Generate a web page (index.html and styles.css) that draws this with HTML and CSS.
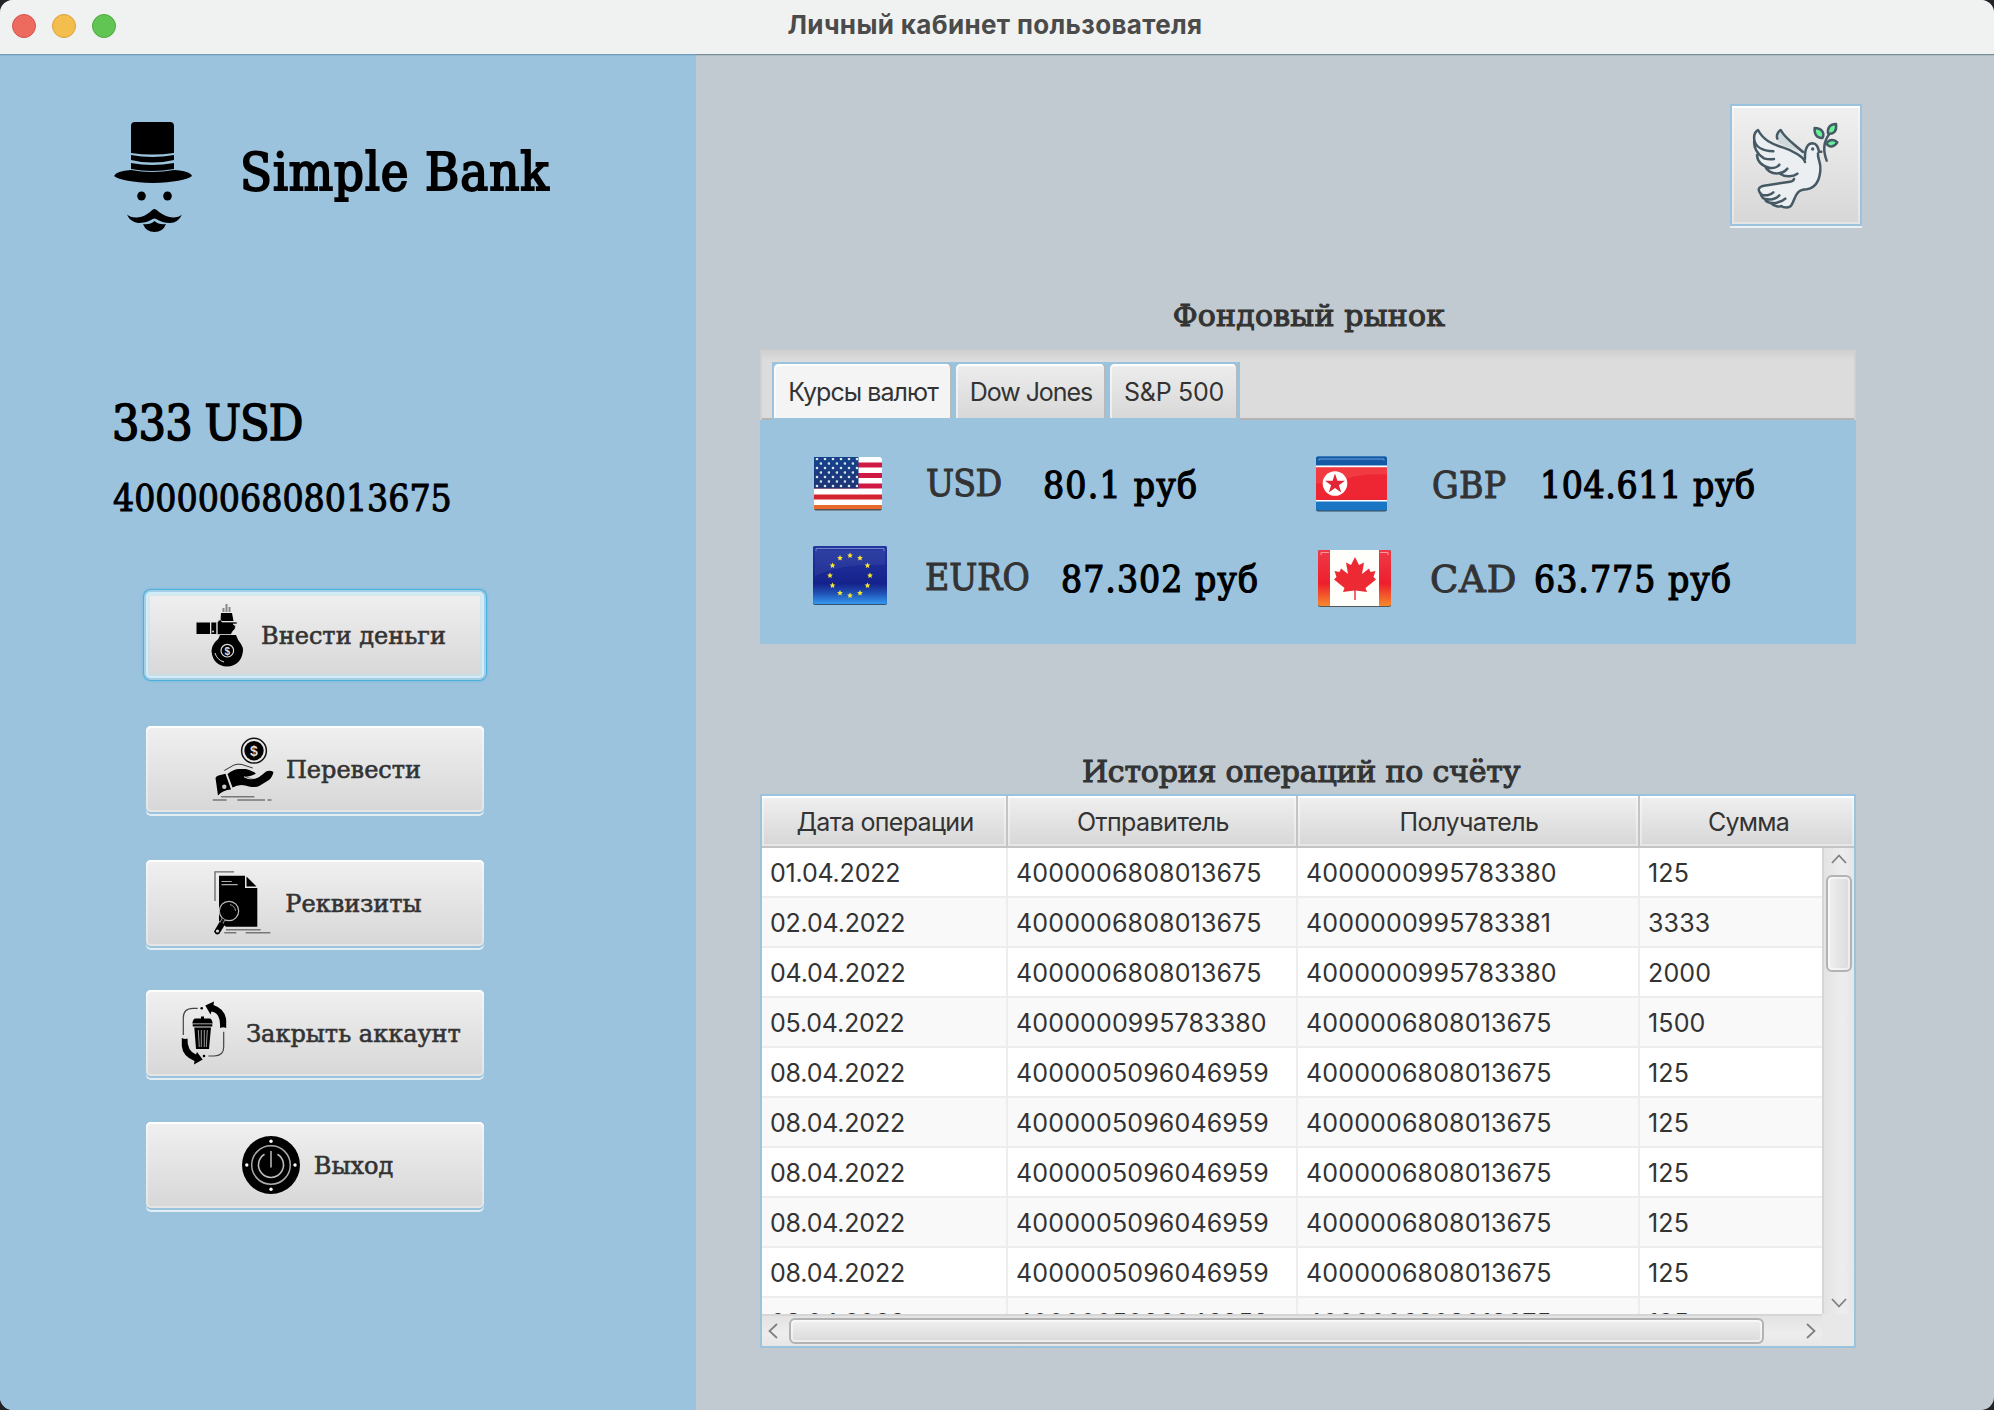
FILE: index.html
```
<!DOCTYPE html>
<html lang="ru">
<head>
<meta charset="utf-8">
<title>Личный кабинет пользователя</title>
<link rel="stylesheet" href="styles.css">
</head>
<body>
<div class="window">
  <header class="titlebar">
    <div class="lights"><i class="light red"></i><i class="light yellow"></i><i class="light green"></i></div>
    <h1 class="window-title">Личный кабинет пользователя</h1>
  </header>
  <div class="content">
    <aside class="side">
      <div class="brand">
        <svg class="logo" viewBox="114 122 78 110">
          <path d="M131 153V126Q131 122 135 122H170Q174 122 174 126V153Q152 156 131 153Z"/>
          <path d="M131 155Q152 159 174 155V160Q152 165 131 160Z"/>
          <path d="M131 163Q152 167 174 163V169Q152 173 131 169Z"/>
          <path d="M114 176Q116 171 131 170Q152 174 174 170Q190 171 192 176Q184 182 153 183Q122 182 114 176Z"/>
          <ellipse cx="141.500" cy="196" rx="4.300" ry="4.500"/><ellipse cx="167.500" cy="196" rx="4.300" ry="4.500"/>
          <path d="M154.500 209Q156 209 159 212Q166 217 173 217.500Q179 217.500 182 214.500Q178 223 170 223Q163 223 158 220Q154.500 217 151 220Q146 223 138 223Q130 222 127 214.500Q131 218 137 217.500Q144 217 150 212Q153 209 154.500 209Z"/>
          <path d="M143 224Q150 225 154.500 221Q159 225 166 224Q163 232 154.500 232Q146 232 143 224Z"/>
        </svg>
        <span class="brand-name">Simple Bank</span>
      </div>
      <div class="balance">333 USD</div>
      <div class="account">4000006808013675</div>
      <nav class="actions">
        <button class="btn focused">
          <svg class="icon" viewBox="0 0 64 64">
            <path d="M39.500 9V5M42.500 9V1M45.500 9V4" stroke="#888" stroke-width="2"/>
            <path d="M37 10H48L49.500 18H36.500Z"/>
            <rect x="12.500" y="19.500" width="13.500" height="11.500"/><rect x="27.300" y="19.500" width="5" height="11.500"/>
            <circle cx="29" cy="28.500" r="1" fill="#ddd"/>
            <path d="M36 32H52Q54 38 57 41Q59.500 45 59 48Q57 63 43 63.500Q29 63 27.500 48Q28 42 32 38Q35 36 36 32Z"/>
            <path d="M33.300 19.500Q34.500 17 36.500 16.500L38 19H53V21H49L51.500 23L51 26L49 28L47 31.500H33.300Z" stroke="#ddd" stroke-width=".7"/>
            <circle cx="43.300" cy="47.700" r="6.300" fill="none" stroke="#ddd" stroke-width="1.200"/>
            <text class="coin-sign" x="43.300" y="51.500" font-size="10">$</text>
            <path d="M31 50Q33 57 40 59" fill="none" stroke="#ddd"/>
          </svg>
          <span>Внести деньги</span>
        </button>
        <button class="btn transfer">
          <svg class="icon" viewBox="0 0 64 64">
            <circle cx="45" cy="13.700" r="12.400" fill="none" stroke="#111" stroke-width="1.500"/>
            <circle cx="45" cy="13.700" r="9.700"/>
            <text class="coin-sign" x="45" y="18.700" font-size="14">$</text>
            <path d="M6.500 41Q7 39 9.500 38.500L16.500 36.700L22 52.500Q14 53 9 58.500Z"/>
            <circle cx="15.300" cy="49.700" r="2.200" fill="#ccc"/>
            <path d="M18.500 37Q25 32 30 32H37Q44 34 47 36.500Q43 39 35 40L46 41.500Q50 41 57 34.500Q61 33 64.500 35Q63 42 57.500 44.500L51 48.500Q47 51 40 49.500Q31 46 23.500 50.500Z"/>
            <path d="M35 39.700Q41 43.500 47.500 40.500" fill="none" stroke="#ddd"/>
            <path d="M15.300 33.500L25 28Q29 26.500 33 27.500L43.700 31" fill="none" stroke="#333"/>
            <path d="M12 59.700H45.300M3.700 63H17.700M28.300 63H56M58.500 63H62.500" stroke="#777" stroke-width="1.500"/>
          </svg>
          <span>Перевести</span>
        </button>
        <button class="btn details">
          <svg class="icon" viewBox="0 0 64 64">
            <path d="M7 30V.8H26" fill="none" stroke="#666" stroke-width="1.300"/>
            <path d="M11 4.700H37V17H49.300V55.700H18L11 50Z"/>
            <path d="M38.500 5.500L48.500 15.500H38.500Z"/>
            <path d="M13.500 10.500H23.700M13.500 13.700H29.700" stroke="#aaa" stroke-width="1.200"/>
            <circle cx="21" cy="40" r="9.700" stroke="#bbb" stroke-width="1.200"/>
            <path d="M22 33.500Q27 35 27.500 40" fill="none" stroke="#999"/>
            <path d="M15.500 48L12.500 54" stroke="#999" stroke-width="4"/><path d="M15.500 48L12.500 54" stroke="#111" stroke-width="2.500"/>
            <path d="M11.500 51L17 53.500L11.500 62.500Q8 65 6 60.500Z"/><circle cx="9.500" cy="60" r="1.600" fill="#ddd"/>
            <path d="M18 58.700H52.700M16.300 61.700H28.300M37.700 61.700H62.300" stroke="#777" stroke-width="1.500"/>
          </svg>
          <span>Реквизиты</span>
        </button>
        <button class="btn close">
          <svg class="icon" viewBox="0 0 64 64">
            <path d="M32 15.500H35V17.500H41Q43 18 43.700 22.500H23.300Q24 18 26 17.500H32ZM23.700 23.300H43.300V25.500H23.700ZM25.300 26.500H42L40 48H27Z"/>
            <path d="M29.300 29L30.300 46M32.300 29V46M35.300 29V46M38.300 29L37.300 46" stroke="#aaa" stroke-width=".9"/>
            <path d="M14.300 34V17Q14.300 7.300 24 7.300H28.700M54.700 30.700V46Q54.700 55 45 55H39.300" fill="none" stroke="#444" stroke-width="1.200"/>
            <circle cx="32.700" cy="7.300" r="1.300"/><circle cx="35" cy="55" r="1.300"/>
            <path d="M36.300 4.500L45 .5L44.500 4Q56 8 57.200 19V27Q54 25.500 51 27Q52 12 42.500 10.500L41.500 13.500Z"/>
            <path d="M33.700 58.500L25 63.500L25.500 60Q13.500 55 12.800 45V37Q16 38.500 18.500 37.500Q18 50 27 53.500L28 51Z"/>
          </svg>
          <span>Закрыть аккаунт</span>
        </button>
        <button class="btn exit">
          <svg class="icon" viewBox="0 0 64 64">
            <circle cx="34" cy="32" r="29"/>
            <circle cx="34" cy="32" r="19.300" fill="none" stroke="#aaa" stroke-width="1.500"/>
            <path d="M27.500 21.300A12.500 12.500 0 1 0 40.500 21.300" fill="none" stroke="#bbb" stroke-width="1.600"/>
            <path d="M34 18V34.500" stroke="#aaa" stroke-width="1.700"/>
            <g fill="#fff"><circle cx="34" cy="8.300" r="1.700"/><circle cx="34" cy="56.300" r="1.700"/><circle cx="9.800" cy="32" r="1.700"/><circle cx="58" cy="32" r="1.700"/></g>
          </svg>
          <span>Выход</span>
        </button>
      </nav>
    </aside>
    <main class="main">
      <button class="dove">
        <svg viewBox="96 78 384 354" fill="none" stroke="#455a64" stroke-width="7.500" stroke-linecap="round" stroke-linejoin="round">
          <path d="M232 176C228 166 234 155 242 150C255 175 280 190 309 216C290 212 270 204 236 190Z" fill="#cfd8dc" stroke="none"/>
          <path d="M232 176C228 166 234 155 242 150C255 175 280 190 309 216"/>
          <path d="M315 246C312 232 280 212 250 203C215 192 190 180 174 150C163 157 161 168 163 180C160 190 163 205 171 213L172 228C173 242 182 250 192 254C200 270 215 280 240 279C255 290 280 290 292 284L279 303L192 317C178 320 173 330 182 342L190 355C197 364 203 368 212 367C222 378 232 380 243 378C253 383 263 383 270 380C278 362 283 335 300 331L330 326C362 315 368 275 361 252C355 235 355 225 356 218C356 200 350 190 338 190C318 190 316 215 315 246Z" fill="#eceff1" stroke="none"/>
          <path d="M315 246C312 232 280 212 250 203C215 192 190 180 174 150C163 157 161 168 163 180C166 200 187 213 220 214M163 180C160 200 170 222 192 235C203 238 215 238 222 237M171 225C172 245 185 258 210 264C225 265 235 258 238 254M195 258C200 272 215 282 235 280C250 279 257 272 262 266M240 281C255 292 280 290 292 281"/>
          <path d="M315 236C314 205 323 190 338 190C351 191 354 202 357 215H364M354 220C352 238 364 245 361 272C358 305 345 324 320 328C285 330 289 350 274 376C270 385 250 383 243 378"/>
          <path d="M282 297Q280 304 270 305L192 317C175 320 172 330 182 342C195 350 212 345 220 337M181 338C184 353 190 358 203 358C218 360 232 352 238 346M197 362C205 370 220 370 230 368C242 365 252 360 256 356M214 370C222 379 240 382 243 378"/>
          <circle cx="338" cy="207" r="5" fill="#455a64" stroke="none"/>
          <path d="M380 242C368 210 370 185 388 162"/>
          <g fill="#69f09a"><path d="M344 144C365 144 376 160 367 174C350 175 342 162 344 144Z"/><path d="M408 132C411 152 402 165 384 160C382 143 390 132 408 132Z"/><path d="M412 187C402 202 388 204 379 190C389 177 403 177 412 187Z"/></g>
        </svg>
      </button>
      <h2 class="heading market-heading">Фондовый рынок</h2>
      <section class="tabpane">
        <div class="tabs">
          <div class="tab-group">
            <div class="tab t1 selected">Курсы валют</div><div class="tab t2">Dow Jones</div><div class="tab t3">S&amp;P 500</div>
          </div>
        </div>
        <div class="rates">
          <div class="rate usd">
            <svg class="flag" viewBox="0 0 68 54"><defs><linearGradient id="gu" x2="0" y2="1"><stop stop-color="#16438c"/><stop offset="1" stop-color="#1d3474"/></linearGradient>
              <pattern id="st" width="8" height="9" patternUnits="userSpaceOnUse"><circle cx="3" cy="2" r="1.300" fill="#dce4f0"/><circle cx="7" cy="6.500" r="1.300" fill="#dce4f0"/></pattern></defs>
              <rect width="68" height="53.500" rx="2" fill="#555"/><rect y="0" width="68" height="52" rx="2" fill="#fff"/>
              <path d="M0 5.500H68V10.500H0ZM0 16H68V21H0ZM0 26.500H68V31.500H0Z" fill="#cf1843"/><path d="M0 37.500H68V42.500H0Z" fill="#d4242f"/><path d="M0 48H68V52H0Z" fill="#ea6a2c"/>
              <rect width="44.500" height="31.500" fill="url(#gu)"/><rect x="1" y="1" width="43" height="30" fill="url(#st)"/></svg>
            <span class="code">USD</span><span class="value">80.1 руб</span>
          </div>
          <div class="rate gbp">
            <svg class="flag" viewBox="0 0 71 55"><rect y="1" width="71" height="54" rx="2" fill="#3b4b5b"/><rect width="71" height="54" rx="2" fill="#1a76c4"/><path d="M2 0H69Q71 0 71 2V9H0V2Q0 0 2 0Z" fill="#1558a4"/><path d="M3 4V2.500H68V4" fill="none" stroke="#6ea4d8"/>
              <path d="M0 9H71V45H0Z" fill="#fff"/><path d="M0 11H71V43.500H0Z" fill="#ee2532"/><path d="M0 11H71V18Q40 16 18 27H0Z" fill="#f23a42"/><circle cx="19" cy="27" r="12.300" fill="#fff"/>
              <path d="M19 17L21.400 24.200H29L22.900 28.700L25.200 36L19 31.500L12.800 36L15.100 28.700L9 24.200H16.600Z" fill="#e32636"/></svg>
            <span class="code">GBP</span><span class="value">104.611 руб</span>
          </div>
          <div class="rate eur">
            <svg class="flag" viewBox="0 0 74 59"><defs><linearGradient id="ge" x2="0" y2="1"><stop stop-color="#2236a0"/><stop offset=".65" stop-color="#16228c"/><stop offset=".8" stop-color="#1e4cb0"/><stop offset="1" stop-color="#3497f0"/></linearGradient>
              <path id="s" d="M0-3L.9-1L2.900-.9L1.300.5L1.800 2.600L0 1.500L-1.800 2.600L-1.300.5L-2.900-.9L-.9-1Z" fill="#f6e732"/></defs>
              <rect width="74" height="59" rx="2" fill="#33536f"/><rect width="74" height="58" rx="2" fill="url(#ge)"/><path d="M3 5V2.500H71V5" fill="none" stroke="#7884c8"/>
              <path d="M2 30Q30 17 72 19V4H2Z" fill="#fff" opacity=".06"/>
              <use href="#s" x="37" y="9.500"/><use href="#s" x="47" y="12"/><use href="#s" x="54.500" y="19.500"/><use href="#s" x="57" y="29.500"/><use href="#s" x="54.500" y="39.500"/><use href="#s" x="47" y="47"/><use href="#s" x="37" y="49.500"/><use href="#s" x="27" y="47"/><use href="#s" x="19.500" y="39.500"/><use href="#s" x="17" y="29.500"/><use href="#s" x="19.500" y="19.500"/><use href="#s" x="27" y="12"/></svg>
            <span class="code">EURO</span><span class="value">87.302 руб</span>
          </div>
          <div class="rate cad">
            <svg class="flag" viewBox="0 0 73 57"><defs><linearGradient id="gc" x2="0" y2="1"><stop stop-color="#ee3a48"/><stop offset=".6" stop-color="#ee1f2c"/><stop offset="1" stop-color="#f58a2c"/></linearGradient></defs>
              <rect width="73" height="57" rx="2" fill="#555"/><rect width="73" height="56" rx="2" fill="url(#gc)"/><path d="M12 0H61V56H12Z" fill="#fefefa"/><path d="M3 5V2.500H11M62 2.500H70V5" fill="none" stroke="#f79aa0"/>
              <path d="M37 7L41 15L46 12.500L44 24L51 18.500L52.500 22L57.500 21L55.500 27L58 29.500L47.500 38L49 42L37.700 40.500V50H36.300V40.500L25 42L26.500 38L16 29.500L18.500 27L16.500 21L21.500 22L23 18.500L30 24L28 12.500L33 15Z" fill="#ed2a33"/></svg>
            <span class="code">CAD</span><span class="value">63.775 руб</span>
          </div>
        </div>
      </section>
      <h2 class="heading history-heading">История операций по счёту</h2>
      <section class="table">
        <div class="thead"><div class="th h1">Дата операции</div><div class="th h2">Отправитель</div><div class="th h3">Получатель</div><div class="th h4">Сумма</div></div>
        <div class="viewport">
          <div class="rows">
            <div class="row"><span>01.04.2022</span><span>4000006808013675</span><span>4000000995783380</span><span>125</span></div>
            <div class="row"><span>02.04.2022</span><span>4000006808013675</span><span>4000000995783381</span><span>3333</span></div>
            <div class="row"><span>04.04.2022</span><span>4000006808013675</span><span>4000000995783380</span><span>2000</span></div>
            <div class="row"><span>05.04.2022</span><span>4000000995783380</span><span>4000006808013675</span><span>1500</span></div>
            <div class="row"><span>08.04.2022</span><span>4000005096046959</span><span>4000006808013675</span><span>125</span></div>
            <div class="row"><span>08.04.2022</span><span>4000005096046959</span><span>4000006808013675</span><span>125</span></div>
            <div class="row"><span>08.04.2022</span><span>4000005096046959</span><span>4000006808013675</span><span>125</span></div>
            <div class="row"><span>08.04.2022</span><span>4000005096046959</span><span>4000006808013675</span><span>125</span></div>
            <div class="row"><span>08.04.2022</span><span>4000005096046959</span><span>4000006808013675</span><span>125</span></div>
            <div class="row"><span>08.04.2022</span><span>4000005096046959</span><span>4000006808013675</span><span>125</span></div>
          </div>
          <div class="vbar">
            <svg class="arrow-v" viewBox="0 0 16 10"><path d="M1 9L8 1.500L15 9"/></svg>
            <div class="thumb-v"></div>
            <svg class="arrow-v down" viewBox="0 0 16 10"><path d="M1 1L8 8.500L15 1"/></svg>
          </div>
        </div>
        <div class="bottom">
          <div class="hbar">
            <svg class="arrow-h" viewBox="0 0 10 16"><path d="M9 1L1.500 8L9 15"/></svg>
            <div class="thumb-h"></div>
            <svg class="arrow-h right" viewBox="0 0 10 16"><path d="M1 1L8.500 8L1 15"/></svg>
          </div>
          <div class="corner"></div>
        </div>
      </section>
    </main>
  </div>
</div>
</body>
</html>
```
FILE: styles.css
```
* { box-sizing: border-box; }
body { margin: 0; background: #222327; }
h1, h2 { margin: 0; font-weight: normal; }
svg { display: block; flex: none; }

.window { width: 1994px; height: 1410px; border-radius: 13px; overflow: hidden; display: flex; flex-direction: column; background: #c0cad0; color: #333; }

.titlebar { height: 54px; flex: none; background: #f0f2f1; display: grid; grid-template-columns: 200px 1fr 204px; }
.lights { display: flex; gap: 16px; padding: 14px 0 0 12px; }
.light { width: 24px; height: 24px; border-radius: 50%; border: 1px solid; }
.red { background: #ec6a5e; border-color: #d6544b; }
.yellow { background: #f4be4f; border-color: #d9a13c; }
.green { background: #61c554; border-color: #51a73e; }
.window-title { font: bold 26px/40px Inter, sans-serif; letter-spacing: .35px; color: #4b4b4b; text-align: center; padding-top: 5px; }

.content { flex: 1; display: flex; min-height: 0; box-shadow: inset 0 1px 0 rgba(40, 70, 90, .4), inset 0 2px 0 rgba(40, 70, 90, .1); }
.side { width: 696px; background: #9bc3de; box-shadow: inset 0 1px 0 #6f9dbc, inset 0 2px 0 #8fb7d2; padding: 68px 0 0 113px; }
.main { flex: 1; padding: 50px 0 0 64px; }

.side, .heading, .rates, .btn { font-family: "DejaVu Serif", serif; }
.brand-name, .balance, .account, .rates { font-family: "DejaVu Serif Condensed", "DejaVu Serif", serif; color: #000; white-space: nowrap; }
.brand { display: flex; height: 110px; padding-left: 1px; }
.logo { width: 78px; height: 110px; }
.brand-name { font-size: 52px; line-height: 60px; letter-spacing: .9px; margin: 20px 0 0 48px; -webkit-text-stroke: 2px #000; }
.balance { font-size: 48px; line-height: 56px; letter-spacing: -.9px; margin: 163px 0 0 -1px; -webkit-text-stroke: 1.5px #000; }
.account { font-size: 37px; line-height: 44px; margin: 26px 0 0 0; -webkit-text-stroke: 1px #000; }

.actions { margin: 71px 0 0 33px; display: flex; flex-direction: column; }
.btn { width: 338px; height: 86px; padding: 0; border: 0; border-radius: 5px; display: flex; justify-content: center; align-items: center; gap: 13px; font-size: 24px; line-height: 36px; color: #333; white-space: nowrap; background: linear-gradient(#f0f0f0, #d7d7d7); box-shadow: inset 0 2px 0 #fff, inset 0 0 0 2px rgba(255, 255, 255, .35), 0 2px 0 #9bc3de, 0 4px 0 #e3edf4; -webkit-text-stroke: .6px #333; }
.btn .icon { width: 64px; height: 64px; overflow: visible; -webkit-text-stroke: 0; }
.btn span { padding-top: 1px; }
.coin-sign { fill: #ddd; font-family: "Liberation Sans", sans-serif; font-weight: bold; text-anchor: middle; }
.focused { box-shadow: inset 0 0 0 2px #d3edf8, inset 0 0 0 4px rgba(190, 226, 240, .55), 0 0 0 2px #a4cfe6, 0 0 0 3px #4bb0de, 0 0 2px 4px rgba(60, 170, 220, .25); }
.transfer, .details { margin-top: 48px; }
.close { margin-top: 44px; }
.exit { margin-top: 46px; }

.dove { margin: 0 0 0 970px; width: 132px; height: 122px; padding: 0; border: 2px solid #9bc3de; background: linear-gradient(#f0f0f0, #d7d7d7); box-shadow: inset 0 2px 0 #fff, inset 0 0 0 2px rgba(255, 255, 255, .35), 0 2px 0 #eef1f3; display: block; }
.dove svg { width: 128px; height: 118px; }

.heading { width: 1096px; font-size: 30px; line-height: 36px; text-align: center; -webkit-text-stroke: 1.1px #333; }
.market-heading { margin: 72px 0 16px 1px; letter-spacing: .2px; }
.history-heading { margin: 110px 0 4px; padding-right: 14px; letter-spacing: -.2px; }

.tabpane { width: 1096px; height: 294px; background: #9bc3de; }
.tabs { height: 70px; padding: 12px 0 0 12px; background: linear-gradient(#cfcfcf, #dcdcdc 10px); box-shadow: inset 2px 0 0 #d0d0d0, inset -2px 0 0 #d0d0d0, inset 0 -2px 0 #b4b4b4; font: 25px/52px Inter, sans-serif; }
.tab-group { width: 468px; height: 58px; display: flex; gap: 4px; padding: 2px 0 4px 2px; background: #9bc3de; }
.tab { height: 54px; border-right: 2px solid #b9b9b9; border-radius: 5px 5px 0 0; background: linear-gradient(#ededed, #d8d8d8); box-shadow: inset 0 2px 0 #fff, inset 2px 0 0 rgba(255, 255, 255, .5); text-align: center; white-space: nowrap; padding: 2px 0 0 2px; }
.selected { background: #f4f4f4; }
.t1 { width: 178px; letter-spacing: -.95px; }
.t2 { width: 150px; letter-spacing: -1.05px; }
.t3 { width: 128px; letter-spacing: -.3px; }

.rates { display: grid; grid-template-columns: 548px 548px; grid-auto-rows: 94px; font-size: 37px; line-height: 44px; }
.rate { display: flex; align-items: flex-start; }
.code { color: #333; -webkit-text-stroke: 1px #333; }
.value { -webkit-text-stroke: 1.2px #000; margin-top: 44px; }
.usd .flag { width: 68px; height: 54px; margin: 37px 0 0 54px; }
.usd .code { margin: 42px 0 0 44px; width: 117px; letter-spacing: -.7px; }
.usd .value { letter-spacing: 1.2px; }
.eur .flag { width: 74px; height: 59px; margin: 32px 0 0 53px; }
.eur .code { margin: 42px 0 0 38px; width: 136px; }
.eur .value { letter-spacing: 1px; }
.gbp .flag { width: 71px; height: 56px; margin: 36px 0 0 8px; }
.gbp .code { margin: 44px 0 0 45px; width: 108px; letter-spacing: .3px; }
.gbp .value { letter-spacing: .6px; }
.cad .flag { width: 73px; height: 57px; margin: 36px 0 0 10px; }
.cad .code { margin: 44px 0 0 39px; width: 104px; font-family: "DejaVu Serif", serif; letter-spacing: .8px; }
.cad .value { letter-spacing: 1px; }

.table { width: 1096px; height: 554px; border: 2px solid #9bc3de; font: 25px/48px Inter, sans-serif; background: #fff; }
.thead { display: grid; grid-template-columns: 246px 290px 342px 214px; height: 52px; border-bottom: 2px solid #c4c4c4; }
.th { border-right: 2px solid #c4c4c4; background: linear-gradient(#f0f0f0, #d7d7d7); box-shadow: inset 0 2px 0 #fff, inset 0 0 0 2px rgba(255, 255, 255, .4); text-align: center; padding: 2px 0 0 2px; }
.h1 { letter-spacing: -.65px; }
.h2 { letter-spacing: -.6px; }
.h3 { letter-spacing: -.5px; }
.h4 { letter-spacing: -.8px; border-right: 0; padding-left: 3px; }
.viewport { display: flex; height: 466px; overflow: hidden; }
.rows { width: 1060px; }
.row { display: grid; grid-template-columns: 246px 290px 342px 182px; height: 50px; }
.row:nth-child(even) { background: #f9f9f9; }
.row span { height: 50px; padding: 2px 0 0 8px; line-height: 47px; border-right: 2px solid #ededed; border-bottom: 2px solid #ededed; letter-spacing: .15px; }
.row span:first-child { letter-spacing: -.2px; }
.row span:last-child { border-right: 0; }
.vbar { width: 32px; height: 466px; border-left: 2px solid #d6d6d6; background: linear-gradient(90deg, #e3e3e3, #ededed 60%, #e6e6e6); display: flex; flex-direction: column; align-items: center; padding: 6px 0; }
.arrow-v { width: 16px; height: 10px; }
.arrow-h { width: 10px; height: 16px; }
.arrow-v path, .arrow-h path { fill: none; stroke: #808080; stroke-width: 1.8; }
.thumb-v { width: 26px; height: 97px; margin-top: 11px; border: 2px solid #b3b3b3; border-radius: 6px; background: linear-gradient(90deg, #f0f0f0, #dadada); box-shadow: inset 0 0 0 2px rgba(255, 255, 255, .5); }
.down { margin-top: auto; }
.bottom { display: flex; height: 32px; }
.hbar { width: 1060px; height: 32px; border-top: 2px solid #d6d6d6; background: linear-gradient(#e3e3e3, #ededed 60%, #e6e6e6); display: flex; align-items: center; padding: 2px 6px; }
.thumb-h { width: 975px; height: 26px; margin-left: 11px; border: 2px solid #b3b3b3; border-radius: 6px; background: linear-gradient(#f0f0f0, #dadada); box-shadow: inset 0 0 0 2px rgba(255, 255, 255, .5); }
.right { margin-left: auto; }
.corner { width: 32px; height: 32px; background: #e8e8e8; }
```
